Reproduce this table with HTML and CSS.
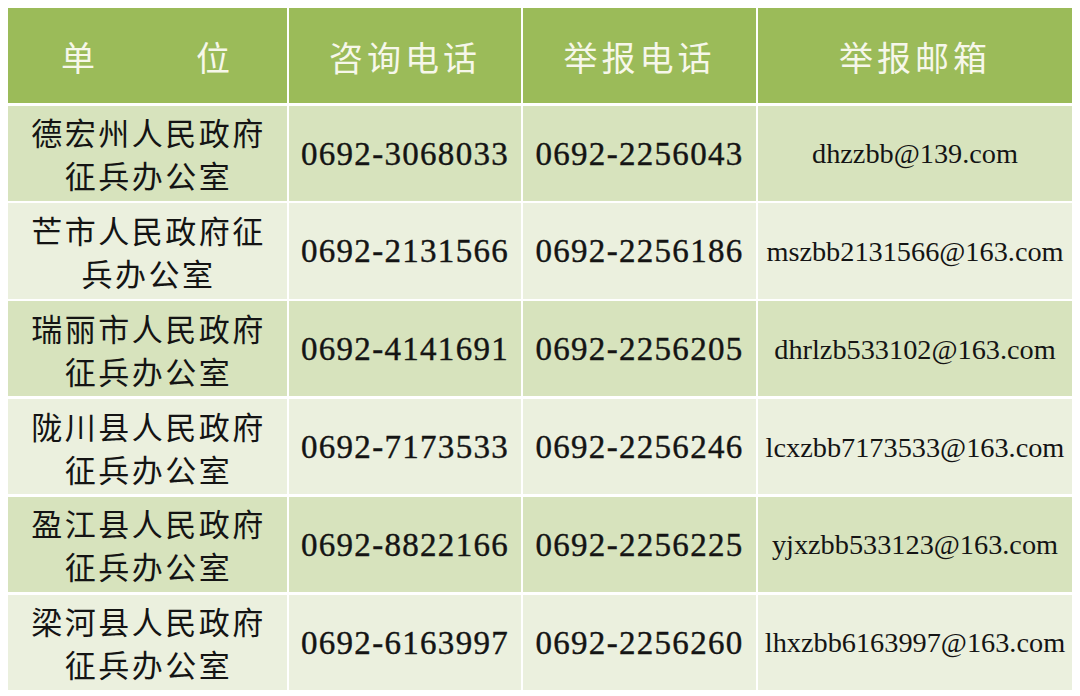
FILE: index.html
```html
<!DOCTYPE html>
<html lang="zh-CN">
<head>
<meta charset="utf-8">
<title>征兵办公室联系方式</title>
<link rel="stylesheet" href="styles.css">
</head>
<body>
<div class="table">
  <div class="cell head unit"><span>单</span><span class="gapper">位</span></div>
  <div class="cell head">咨询电话</div>
  <div class="cell head">举报电话</div>
  <div class="cell head">举报邮箱</div>

  <div class="cell odd name">德宏州人民政府<br>征兵办公室</div>
  <div class="cell odd num">0692-3068033</div>
  <div class="cell odd num">0692-2256043</div>
  <div class="cell odd mail">dhzzbb@139.com</div>

  <div class="cell even name">芒市人民政府征<br>兵办公室</div>
  <div class="cell even num">0692-2131566</div>
  <div class="cell even num">0692-2256186</div>
  <div class="cell even mail">mszbb2131566@163.com</div>

  <div class="cell odd name">瑞丽市人民政府<br>征兵办公室</div>
  <div class="cell odd num">0692-4141691</div>
  <div class="cell odd num">0692-2256205</div>
  <div class="cell odd mail">dhrlzb533102@163.com</div>

  <div class="cell even name">陇川县人民政府<br>征兵办公室</div>
  <div class="cell even num">0692-7173533</div>
  <div class="cell even num">0692-2256246</div>
  <div class="cell even mail">lcxzbb7173533@163.com</div>

  <div class="cell odd name">盈江县人民政府<br>征兵办公室</div>
  <div class="cell odd num">0692-8822166</div>
  <div class="cell odd num">0692-2256225</div>
  <div class="cell odd mail">yjxzbb533123@163.com</div>

  <div class="cell even name">梁河县人民政府<br>征兵办公室</div>
  <div class="cell even num">0692-6163997</div>
  <div class="cell even num">0692-2256260</div>
  <div class="cell even mail">lhxzbb6163997@163.com</div>
</div>
</body>
</html>
```

FILE: styles.css
```css
html, body {
  margin: 0;
  padding: 0;
  background: #ffffff;
}

body {
  padding: 8px;
}

.table {
  display: grid;
  grid-template-columns: 279px 232px 233px 314px;
  grid-template-rows: 95px repeat(6, 95.2px);
  column-gap: 2px;
  row-gap: 2.6px;
  width: 1064px;
  background: #ffffff;
}

.cell {
  display: flex;
  align-items: center;
  justify-content: center;
  text-align: center;
  color: #141414;
}

.head {
  background: #9bbb59;
  color: #f6f7ea;
  font-family: "Noto Sans CJK SC", sans-serif;
  font-size: 34px;
  font-weight: 400;
  letter-spacing: 4px;
  padding-top: 2px;
}

.unit .gapper {
  margin-left: 97px;
}

.odd {
  background: #d7e3bd;
}

.even {
  background: #ebf0de;
}

.name {
  font-family: "Noto Sans CJK SC", sans-serif;
  font-size: 31px;
  line-height: 43px;
  letter-spacing: 2.5px;
  padding-left: 2px;
}

.num {
  font-family: "Liberation Serif", "Times New Roman", serif;
  font-size: 33px;
  letter-spacing: 1.3px;
  padding-top: 2px;
  -webkit-text-stroke: 0.4px #141414;
}

.mail {
  font-family: "Liberation Serif", "Times New Roman", serif;
  font-size: 28.3px;
  padding-top: 2px;
}
```
